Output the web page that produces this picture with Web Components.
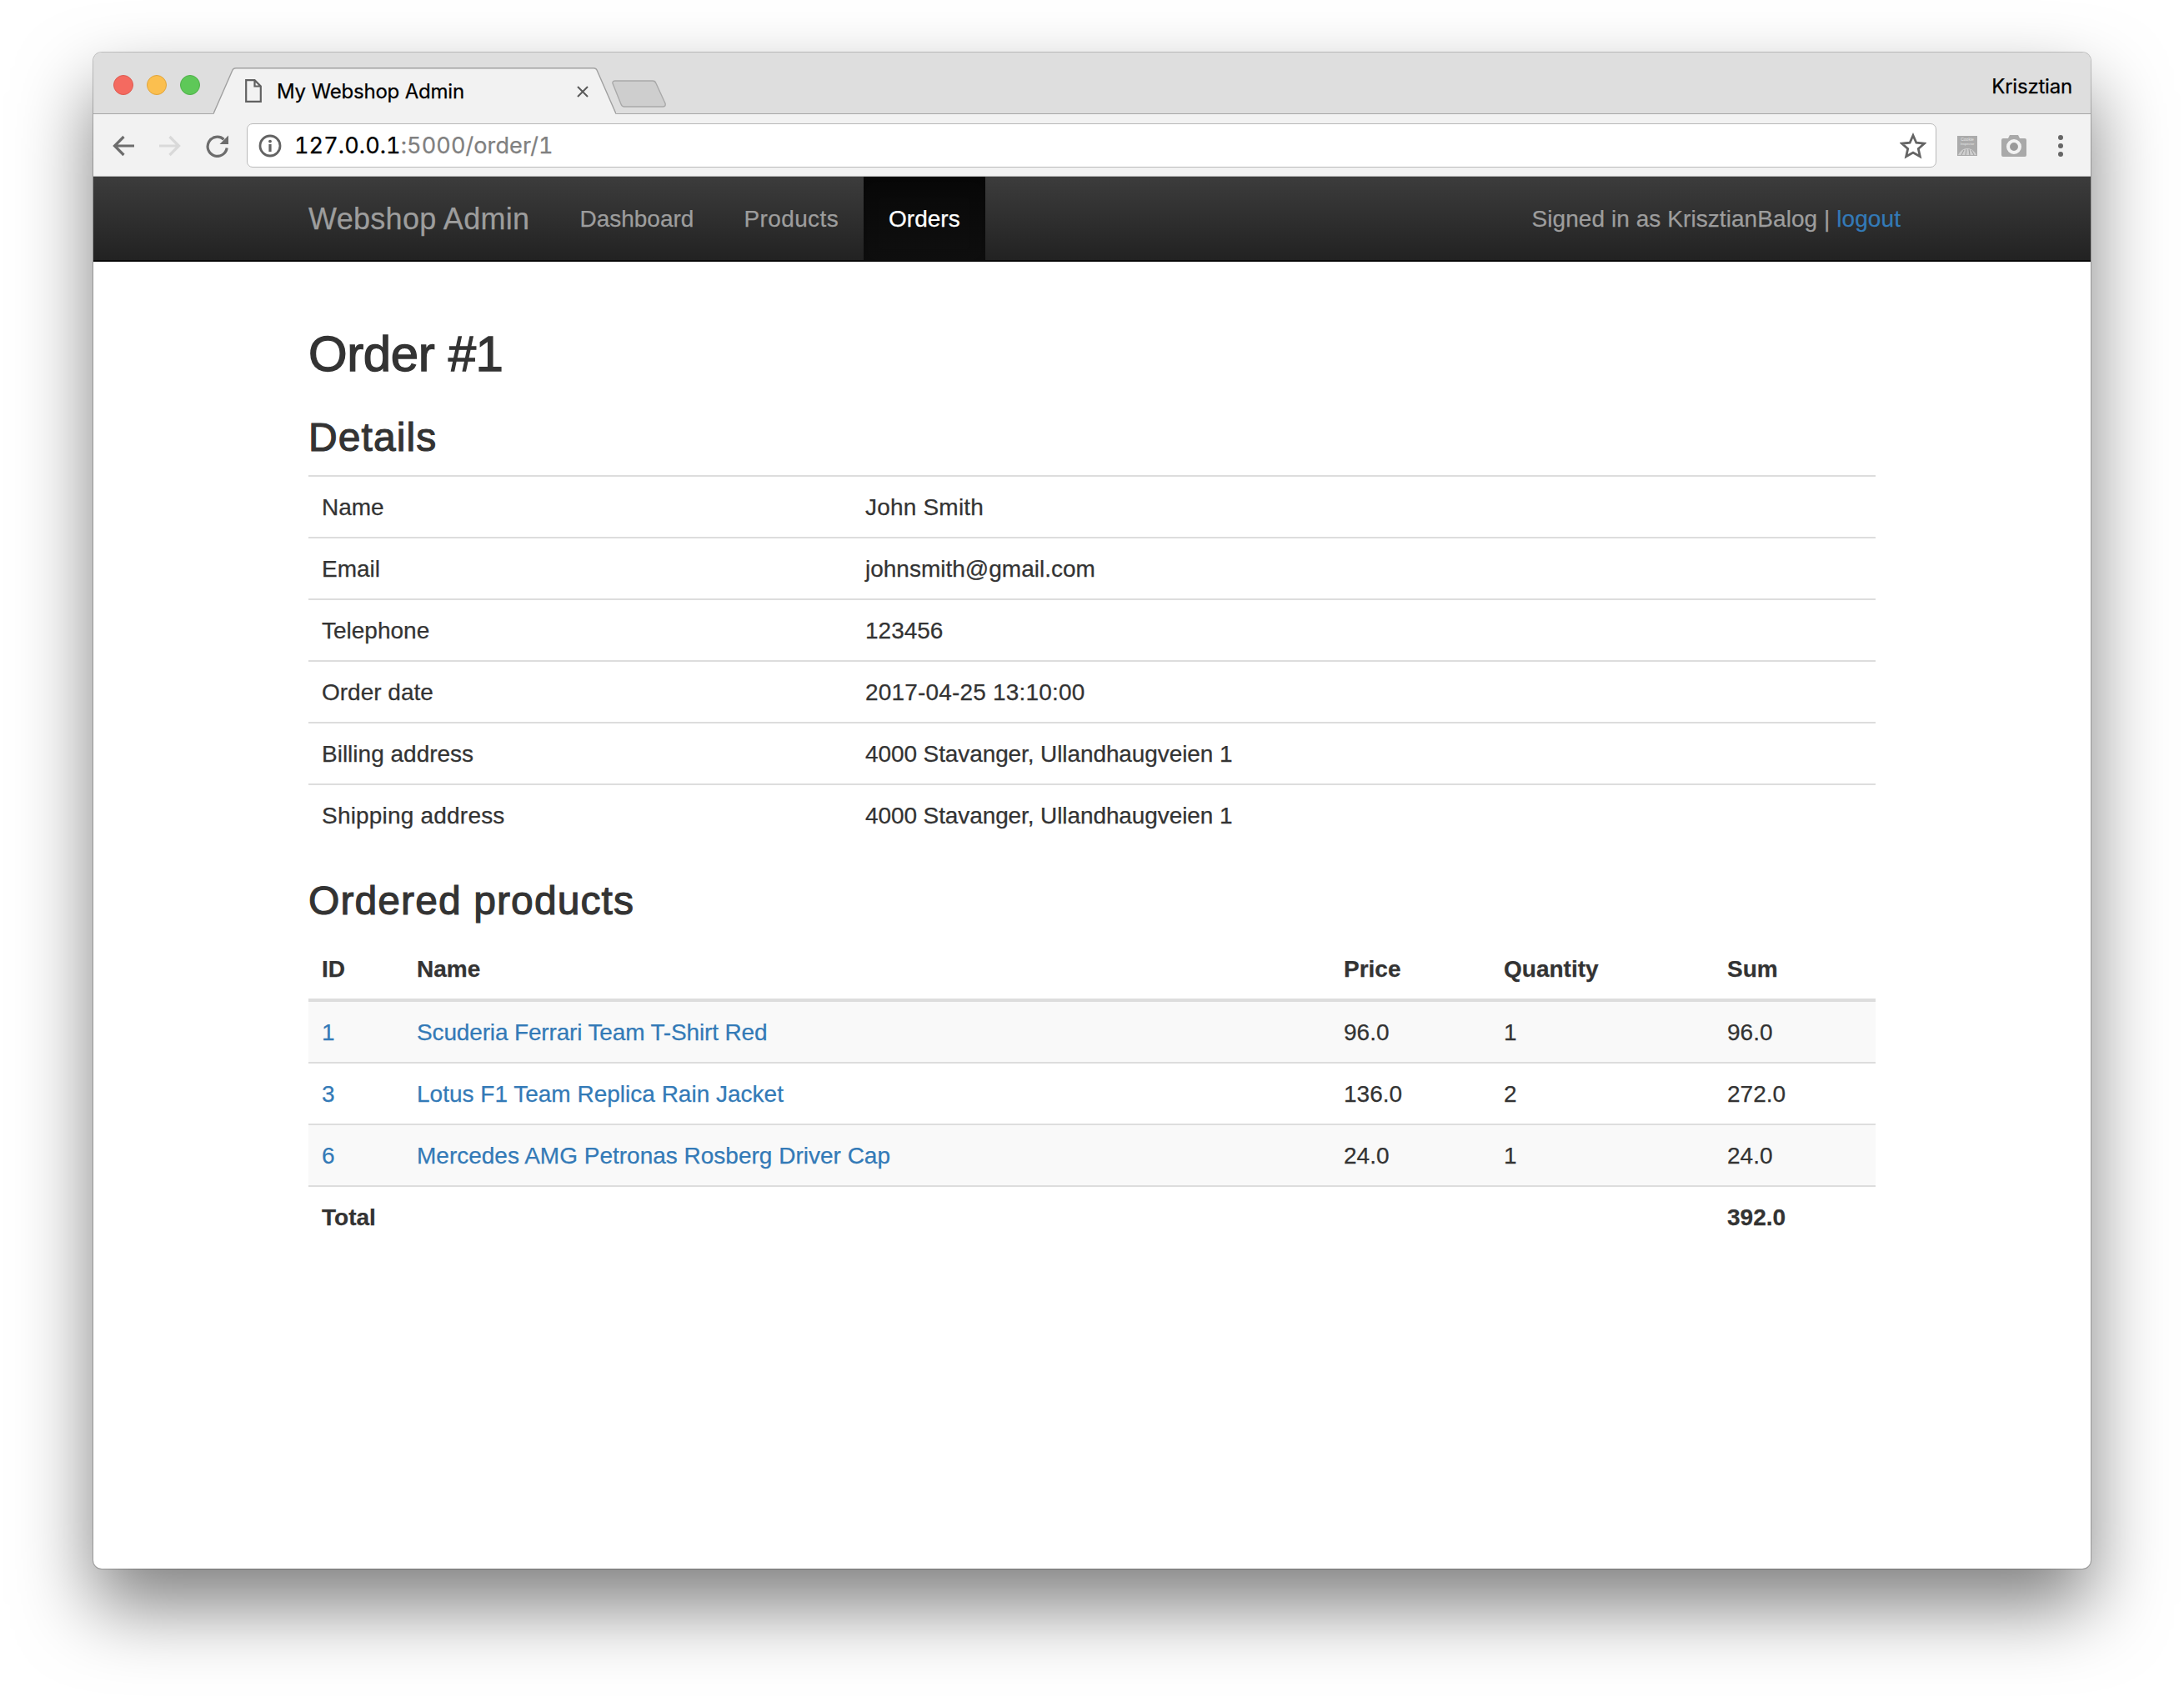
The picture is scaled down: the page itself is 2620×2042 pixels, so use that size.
<!DOCTYPE html>
<html lang="en">

<head>
    <meta charset="UTF-8">
    <title>My Webshop Admin</title>
    <style>
        html, body { margin: 0; background: #fff; }
        body {
            width: 2620px;
            height: 2042px;
            overflow: hidden;
            padding: 63px 112px 0;
            box-sizing: border-box;
            font-family: "Liberation Sans", Arial, sans-serif;
            font-size: 28px;
            color: #333;
            -webkit-text-stroke: .25px currentColor;
        }
    </style>
</head>

<body>

    <template id="app-window-tpl">
        <style>
            :host {
                display: flex;
                flex-direction: column;
                width: 2396px;
                height: 1819px;
                background: #fff;
                border-radius: 10px;
                box-shadow: 0 0 0 1px rgba(0, 0, 0, .22), 0 45px 90px rgba(0, 0, 0, .5);
                overflow: hidden;
            }
        </style>
        <slot></slot>
    </template>

    <template id="tab-strip-tpl">
        <style>
            :host {
                display: flex;
                align-items: flex-start;
                height: 74px;
                box-sizing: border-box;
                background: #dedede;
                border-bottom: 1px solid #a6a6a6;
                font-family: Inter, "Liberation Sans", sans-serif;
                color: #000;
            }
            .lights { display: flex; gap: 16px; margin: 27px 0 0 24px; }
            .lights i { width: 24px; height: 24px; border-radius: 50%; box-sizing: border-box; border: 1px solid; }
            .red { background: #f46a60; border-color: #de5a50 !important; }
            .amber { background: #fbbf4f; border-color: #e0a53c !important; }
            .green { background: #5ec858; border-color: #4eb049 !important; }
            .tab {
                position: relative;
                width: 483px;
                height: 56px;
                margin: 18px 0 0 16px;
                display: flex;
                align-items: center;
            }
            .tab > svg.shape { position: absolute; left: 0; top: 0; }
            .file { position: relative; margin-left: 38px; }
            .title { position: relative; margin-left: 18px; font-size: 24px; letter-spacing: -.2px; width: 351px; white-space: nowrap; line-height: 56px; margin-top: 2px; }
            .close { position: relative; margin-left: 8px; margin-top: 2px; }
            .newtab { margin: 33px 0 0 -5px; }
            .user { margin: 28px 22px 0 auto; font-size: 24px; letter-spacing: -.2px; line-height: 26px; }
        </style>
        <div class="lights"><i class="red"></i><i class="amber"></i><i class="green"></i></div>
        <div class="tab">
            <svg class="shape" width="483" height="57" viewBox="0 0 483 57">
                <path d="M0 56 L23 3 Q24 .7 27 .7 H456 Q459 .7 460 3 L483 56 Z" fill="#f2f2f2" />
                <path d="M0 55.5 L23 3 Q24 .7 27 .7 H456 Q459 .7 460 3 L483 55.5" fill="none" stroke="#a0a0a0" stroke-width="1.4" />
            </svg>
            <svg class="file" width="20" height="28" viewBox="0 0 20 28">
                <path d="M1.2 1.2 H11.5 L18.8 8.5 V26.8 H1.2 Z M11.5 1.2 V8.5 H18.8" fill="none" stroke="#616161" stroke-width="2.2" />
            </svg>
            <span class="title"><slot name="title"></slot></span>
            <svg class="close" width="16" height="16" viewBox="0 0 16 16">
                <path d="M2 2 L14 14 M14 2 L2 14" stroke="#5a5a5a" stroke-width="2" />
            </svg>
        </div>
        <svg class="newtab" width="66" height="33" viewBox="0 0 66 33">
            <path d="M1 4 Q.5 1 4 1 H49 Q52 1 53 4 L64 28 Q65 32 61 32 H15 Q12 32 11 29 Z" fill="#cecece" stroke="#a9a9a9" stroke-width="1.4" />
        </svg>
        <span class="user"><slot name="user"></slot></span>
    </template>

    <template id="browser-toolbar-tpl">
        <style>
            :host {
                display: flex;
                align-items: center;
                height: 75px;
                box-sizing: border-box;
                padding: 1px 33px 0 23px;
                background: #f2f2f2;
                border-bottom: 1px solid #b4b4b4;
                font-family: Inter, "Liberation Sans", sans-serif;
            }
            svg { display: block; flex: none; }
            .address {
                flex: 1;
                height: 53px;
                box-sizing: border-box;
                margin: 0 25px 0 21px;
                padding: 0 11px 0 13px;
                display: flex;
                align-items: center;
                background: #fff;
                border: 1px solid #b9b9b9;
                border-radius: 7px;
            }
            .url { margin-left: 15px; font-size: 27px; font-feature-settings: "calt" 0, "tnum" 1; letter-spacing: .1px; color: #000; flex: 1; white-space: nowrap; }
            .forward { margin: 0 30px; }
            .camera { margin-left: 29px; }
            .dots { margin-left: 38px; }
            ::slotted(span) { color: #808080; }
        </style>
        <svg width="26" height="26" viewBox="0 0 26 26">
            <path d="M26 13 H3 M13.5 2 L2.5 13 L13.5 24" fill="none" stroke="#6d6d6d" stroke-width="3.2" />
        </svg>
        <svg class="forward" width="26" height="26" viewBox="0 0 26 26">
            <path d="M0 13 H23 M12.5 2 L23.5 13 L12.5 24" fill="none" stroke="#d9d9d9" stroke-width="3.2" />
        </svg>
        <svg width="28" height="28" viewBox="0 0 28 28">
            <path d="M21.5 6.2 A11.6 11.6 0 1 0 25.2 16.5" fill="none" stroke="#6d6d6d" stroke-width="3.2" />
            <path d="M27 1.5 V12 H16.5 Z" fill="#6d6d6d" />
        </svg>
        <div class="address">
            <svg width="28" height="28" viewBox="0 0 28 28">
                <circle cx="14" cy="14" r="12" fill="none" stroke="#636363" stroke-width="2.8" />
                <rect x="12.4" y="12" width="3.2" height="9" fill="#636363" />
                <circle cx="14" cy="8.6" r="1.9" fill="#636363" />
            </svg>
            <span class="url"><slot></slot></span>
            <svg width="32" height="32" viewBox="0 0 32 32">
                <path d="M16 3.5 L19.9 12.2 L29.4 13.2 L22.3 19.5 L24.3 28.8 L16 24 L7.7 28.8 L9.7 19.5 L2.6 13.2 L12.1 12.2 Z" fill="none" stroke="#646464" stroke-width="2.8" />
            </svg>
        </div>
        <svg width="24" height="24" viewBox="0 0 24 24">
            <rect width="24" height="24" fill="#ababab" />
            <text x="12" y="6" font-size="5" font-family="Liberation Sans" fill="#e6e6e6" stroke="none" text-anchor="middle">Cookie</text>
            <text x="12" y="11" font-size="4" font-family="Liberation Sans" fill="#e6e6e6" stroke="none" text-anchor="middle">Inspector</text>
            <path d="M1 23 Q5 15 12 15 Q19 15 23 23 Z" fill="#cfcfcf" />
            <path d="M5 23 L8 17 M10 23 L11 16 M15 23 L14 16 M20 23 L17 17" stroke="#9b9b9b" stroke-width="1" />
        </svg>
        <svg class="camera" width="30" height="27" viewBox="0 0 30 27">
            <path d="M2 5 H8 L10 1 H20 L22 5 H28 Q30 5 30 7 V25 Q30 27 28 27 H2 Q0 27 0 25 V7 Q0 5 2 5 Z" fill="#a9a9a9" />
            <circle cx="15" cy="15" r="7" fill="none" stroke="#f2f2f2" stroke-width="4" />
            <circle cx="15" cy="15" r="4.5" fill="#9a9a9a" />
        </svg>
        <svg class="dots" width="6" height="26" viewBox="0 0 6 26">
            <circle cx="3" cy="3" r="3" fill="#666" />
            <circle cx="3" cy="13" r="3" fill="#666" />
            <circle cx="3" cy="23" r="3" fill="#666" />
        </svg>
    </template>

    <template id="site-navbar-tpl">
        <style>
            :host {
                display: block;
                height: 102px;
                box-sizing: border-box;
                background: linear-gradient(#3c3c3c, #222);
                border-bottom: 2px solid #080808;
                color: #9d9d9d;
            }
            .inner {
                width: 1880px;
                margin: 0 auto;
                padding-left: 0;
                height: 100px;
                display: flex;
                align-items: stretch;
            }
            .brand { font-size: 36px; letter-spacing: .3px; line-height: 101px; padding-right: 30px; }
            .right { margin-left: auto; margin-right: -30px; line-height: 101px; letter-spacing: .07px; }
            ::slotted(a) { color: #337ab7; text-decoration: none; }
        </style>
        <div class="inner">
            <span class="brand"><slot name="brand"></slot></span>
            <slot name="nav"></slot>
            <span class="right"><slot name="right"></slot></span>
        </div>
    </template>

    <template id="nav-link-tpl">
        <style>
            :host {
                display: block;
                padding: 0 30px;
                line-height: 101px;
                color: #9d9d9d;
            }
            :host([active]) {
                color: #fff;
                background: linear-gradient(#080808, #0f0f0f);
                box-shadow: inset 0 6px 18px rgba(0, 0, 0, .25);
            }
        </style>
        <slot></slot>
    </template>

    <template id="order-page-tpl">
        <style>
            :host {
                display: block;
                width: 1880px;
                margin: 0 auto;
                padding-top: 78px;
            }
            ::slotted(h1) { margin: 0 0 40px; font-size: 60px; font-weight: 400; letter-spacing: -.4px; line-height: 66px; -webkit-text-stroke: 1.3px currentColor; }
            ::slotted(h3) { margin: 0 0 18px; font-size: 48px; font-weight: 400; letter-spacing: 1.1px; line-height: 54px; -webkit-text-stroke: 1.1px currentColor; }
        </style>
        <slot></slot>
    </template>

    <template id="data-table-tpl">
        <style>
            :host {
                display: block;
                margin-bottom: 40px;
                --cols: 1fr;
            }
            :host([kind="details"]) { --cols: 652px 1fr; }
            :host([kind="products"]) { --cols: 114px 1112px 192px 268px 194px; }
        </style>
        <slot></slot>
    </template>

    <template id="table-row-tpl">
        <style>
            :host {
                display: grid;
                grid-template-columns: var(--cols);
                border-top: 2px solid #ddd;
                line-height: 40px;
            }
            :host([head]) { border-top: 0; border-bottom: 4px solid #ddd; font-weight: 700; }
            :host([first]) { border-top: 0; }
            :host([striped]) { background: #f9f9f9; }
            :host([total]) { font-weight: 700; }
            ::slotted(*) { padding: 17px 16px 15px; min-height: 40px; }
            ::slotted(a) { color: #337ab7; text-decoration: none; }
        </style>
        <slot></slot>
    </template>

    <app-window>
        <tab-strip>
            <span slot="title">My Webshop Admin</span>
            <span slot="user">Krisztian</span>
        </tab-strip>
        <browser-toolbar>127.0.0.1<span>:5000/order/1</span></browser-toolbar>
        <site-navbar>
            <span slot="brand">Webshop Admin</span>
            <nav-link slot="nav">Dashboard</nav-link>
            <nav-link slot="nav" style="letter-spacing:.4px">Products</nav-link>
            <nav-link slot="nav" active>Orders</nav-link>
            <span slot="right">Signed in as KrisztianBalog | </span>
            <a slot="right" href="#">logout</a>
        </site-navbar>
        <order-page>
            <h1>Order #1</h1>
            <h3>Details</h3>
            <data-table kind="details">
                <table-row><span>Name</span><span style="letter-spacing:.2px">John Smith</span></table-row>
                <table-row><span>Email</span><span>johnsmith@gmail.com</span></table-row>
                <table-row><span>Telephone</span><span>123456</span></table-row>
                <table-row><span>Order date</span><span style="letter-spacing:.18px">2017-04-25 13:10:00</span></table-row>
                <table-row><span>Billing address</span><span style="letter-spacing:-.1px">4000 Stavanger, Ullandhaugveien 1</span></table-row>
                <table-row><span style="letter-spacing:.2px">Shipping address</span><span style="letter-spacing:-.1px">4000 Stavanger, Ullandhaugveien 1</span></table-row>
            </data-table>
            <h3>Ordered products</h3>
            <data-table kind="products">
                <table-row head><span>ID</span><span>Name</span><span>Price</span><span>Quantity</span><span>Sum</span></table-row>
                <table-row first striped><a href="#">1</a><a href="#" style="letter-spacing:-.15px">Scuderia Ferrari Team T-Shirt Red</a><span>96.0</span><span>1</span><span>96.0</span></table-row>
                <table-row><a href="#">3</a><a href="#">Lotus F1 Team Replica Rain Jacket</a><span>136.0</span><span>2</span><span>272.0</span></table-row>
                <table-row striped><a href="#">6</a><a href="#">Mercedes AMG Petronas Rosberg Driver Cap</a><span>24.0</span><span>1</span><span>24.0</span></table-row>
                <table-row total><span>Total</span><span></span><span></span><span></span><span>392.0</span></table-row>
            </data-table>
        </order-page>
    </app-window>

    <script type="module">
        // every element just clones its template into an open shadow root
        const names = ['app-window', 'tab-strip', 'browser-toolbar', 'site-navbar', 'nav-link', 'order-page', 'data-table', 'table-row'];

        for (const name of names) {
            customElements.define(name, class extends HTMLElement {
                constructor() {
                    super();
                    this.attachShadow({ mode: 'open' });
                    const tmp = document.getElementById(name + '-tpl');
                    this.shadowRoot.appendChild(tmp.content.cloneNode(true));
                }
            });
        }
    </script>

</body>

</html>
